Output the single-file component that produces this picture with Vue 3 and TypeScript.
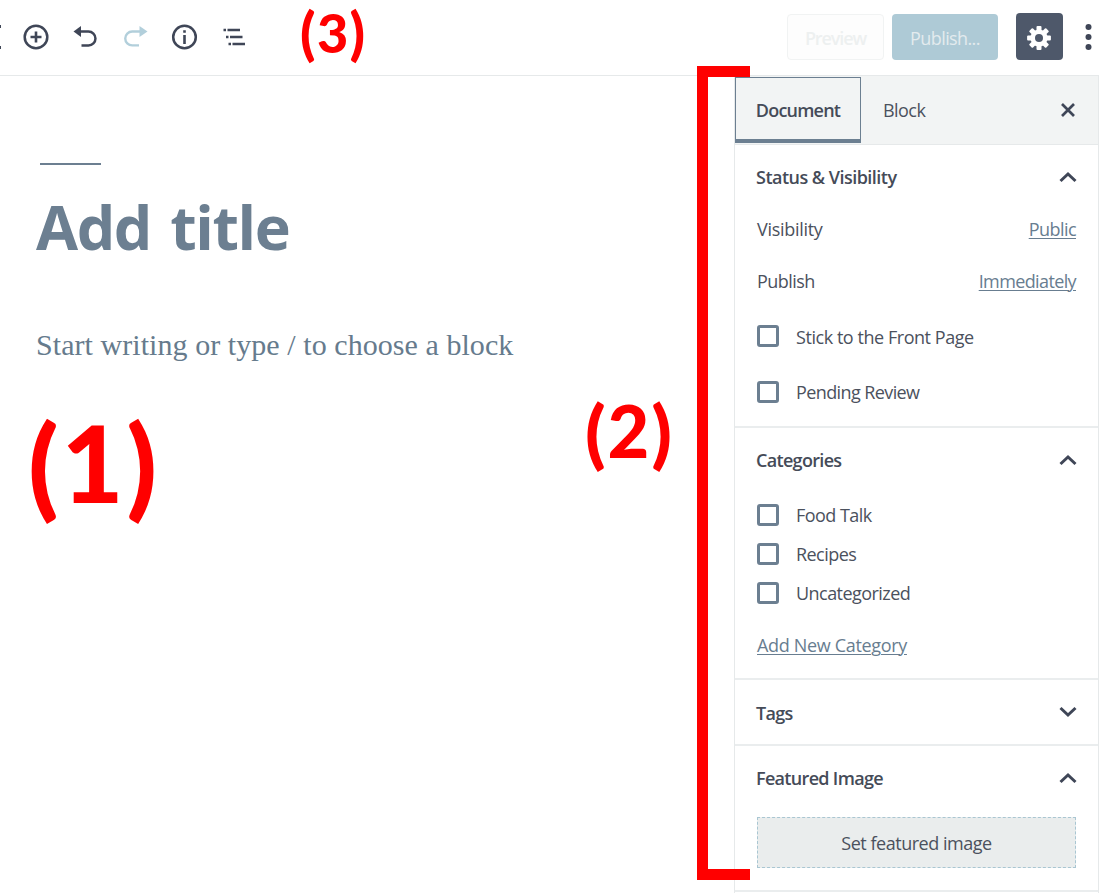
<script setup lang="ts">
import { reactive } from 'vue'

interface Option {
  label: string
  checked: boolean
}

const statusRows = [
  { label: 'Visibility', value: 'Public', key: 'public' },
  { label: 'Publish', value: 'Immediately', key: 'immediately' },
]

const statusOptions = reactive<Option[]>([
  { label: 'Stick to the Front Page', checked: false },
  { label: 'Pending Review', checked: false },
])

const categories = reactive<Option[]>([
  { label: 'Food Talk', checked: false },
  { label: 'Recipes', checked: false },
  { label: 'Uncategorized', checked: false },
])
</script>

<template>
  <div class="editor">
    <header class="toolbar">
      <svg class="tools" width="260" height="75" viewBox="0 0 260 75" fill="none">
        <path d="M0 26.500h1M0 47.500h1" stroke="#3f4657" stroke-width="3" />
        <circle cx="36" cy="37" r="11.300" stroke="#3f4657" stroke-width="2.500" />
        <path d="M36 31.500v11M30.500 37h11" stroke="#3f4657" stroke-width="2.600" />
        <path d="M80 31.500h8.500a6.900 6.900 0 0 1 0 13.900H81.500" stroke="#3f4657" stroke-width="2.500" />
        <path d="M73.500 31.500l7.500-5.500v11z" fill="#3f4657" />
        <path d="M141 31.500h-8.800a6.900 6.900 0 0 0 0 13.900H139" stroke="#b2cfdb" stroke-width="2.400" />
        <path d="M147.500 31.500l-8-5.500v11z" fill="#b2cfdb" />
        <circle cx="184.500" cy="37" r="11.300" stroke="#3f4657" stroke-width="2.500" />
        <path d="M184.500 35v9M184.500 30.200v2.600" stroke="#3f4657" stroke-width="2.600" />
        <path d="M223.500 30h2.500M227.500 30h12.500M226 37h2.500M230 37h12.500M228.500 44h2.500M232.500 44h12.500" stroke="#3f4657" stroke-width="2.500" />
      </svg>
      <div class="actions">
        <button class="btn preview">Preview</button>
        <button class="btn publish">Publish...</button>
        <button class="btn settings" aria-label="Settings">
          <svg width="24" height="24" viewBox="-12 -12 24 24">
            <g fill="#fff">
              <circle r="8.600" />
              <rect v-for="n in 4" :key="n" x="-2.500" y="-11.900" width="5" height="23.800" rx="1" :transform="`rotate(${n * 45})`" />
            </g>
            <circle r="4" fill="#4e586a" />
          </svg>
        </button>
        <svg class="more" width="8" height="30" viewBox="0 0 8 30" fill="#3f4657">
          <circle cx="3.500" cy="5" r="3" />
          <circle cx="3.500" cy="15" r="3" />
          <circle cx="3.500" cy="25" r="3" />
        </svg>
      </div>
    </header>

    <div class="body">
      <main class="canvas">
        <div class="rule"></div>
        <h1 class="title">Add title</h1>
        <p class="prompt">Start writing or type / to choose a block</p>
      </main>

      <aside class="sidebar">
        <nav class="tabs">
          <button class="tab active">Document</button>
          <button class="tab block">Block</button>
          <svg class="close" width="16" height="16" viewBox="0 0 16 16">
            <path d="M2 2l12 12M14 2L2 14" stroke="#3f4657" stroke-width="2.700" />
          </svg>
        </nav>

        <section class="panel status">
          <h2 class="heading">
            <span class="t-status">Status &amp; Visibility</span>
            <svg class="chev" width="18" height="12" viewBox="0 0 18 12"><path d="M1.500 10L9 3l7.500 7" /></svg>
          </h2>
          <div v-for="row in statusRows" :key="row.key" class="row">
            <span :class="`label-${row.key}`">{{ row.label }}</span>
            <a class="link" :class="row.key">{{ row.value }}</a>
          </div>
          <div class="status-options">
            <label v-for="o in statusOptions" :key="o.label" class="option" @click="o.checked = !o.checked">
              <span class="box"></span><span class="text">{{ o.label }}</span>
            </label>
          </div>
        </section>

        <section class="panel categories">
          <h2 class="heading">
            <span>Categories</span>
            <svg class="chev" width="18" height="12" viewBox="0 0 18 12"><path d="M1.500 10L9 3l7.500 7" /></svg>
          </h2>
          <div class="category-options">
            <label v-for="o in categories" :key="o.label" class="option" @click="o.checked = !o.checked">
              <span class="box"></span><span>{{ o.label }}</span>
            </label>
          </div>
          <a class="link add">Add New Category</a>
        </section>

        <section class="panel tags">
          <h2 class="heading">
            <span>Tags</span>
            <svg class="chev" width="18" height="12" viewBox="0 0 18 12"><path d="M1.500 2L9 9l7.500-7" /></svg>
          </h2>
        </section>

        <section class="panel featured">
          <h2 class="heading">
            <span>Featured Image</span>
            <svg class="chev" width="18" height="12" viewBox="0 0 18 12"><path d="M1.500 10L9 3l7.500 7" /></svg>
          </h2>
          <button class="set-image">Set featured image</button>
        </section>
      </aside>
    </div>

    <div class="bracket"></div>
    <div class="note note-1"><i>(</i><b>1</b><i>)</i></div>
    <div class="note note-2"><i>(</i><b>2</b><i>)</i></div>
    <div class="note note-3"><i>(</i><b>3</b><i>)</i></div>
  </div>
</template>

<style>
html,
body {
  margin: 0;
  background: #fff;
  overflow: hidden;
}
</style>

<style scoped>
* {
  box-sizing: border-box;
}
.editor {
  position: relative;
  width: 1099px;
  height: 893px;
  overflow: hidden;
  background: #fff;
  font-family: 'Open Sans', 'Noto Sans', sans-serif;
  font-size: 18px;
  letter-spacing: -0.55px;
  color: #4b515d;
}
button {
  font: inherit;
  letter-spacing: inherit;
  color: inherit;
  padding: 0;
  margin: 0;
  border: 0;
  background: none;
}
.toolbar {
  display: flex;
  justify-content: space-between;
  height: 76px;
  border-bottom: 1px solid #e6e9ea;
}
.tools {
  flex: none;
}
.actions {
  display: flex;
  align-items: flex-start;
  padding-top: 13px;
}
.btn {
  border-radius: 4px;
}
.preview {
  width: 97px;
  height: 46px;
  margin: 1px 8px 0 0;
  padding-top: 1px;
  border: 1px solid #f1f3f3;
  background: #fdfdfd;
  color: #edf0f0;
  font-weight: 600;
  letter-spacing: -1.1px;
}
.publish {
  width: 106px;
  height: 46px;
  margin: 1px 18px 0 0;
  padding-top: 1px;
  background: #aecad6;
  color: #e3ebee;
  letter-spacing: -0.6px;
}
.settings {
  display: flex;
  align-items: center;
  justify-content: center;
  width: 47px;
  height: 47px;
  margin-right: 22px;
  padding-right: 1px;
  background: #4e586a;
}
.settings svg {
  margin-top: 2px;
}
.more {
  margin: 9px 6px 0 0;
}
.body {
  display: flex;
  height: 817px;
}
.canvas {
  flex: 1;
  padding: 87px 0 0 36px;
}
.rule {
  width: 61px;
  height: 2px;
  margin-left: 4px;
  background: #6c7f91;
}
.title {
  margin: 21px 0 0;
  font-size: 61px;
  line-height: 82px;
  font-weight: 700;
  letter-spacing: -1.45px;
  word-spacing: 5px;
  color: #6c7f91;
  white-space: nowrap;
}
.prompt {
  margin: 60px 0 0;
  font-family: 'Liberation Serif', serif;
  font-size: 30px;
  line-height: 34px;
  letter-spacing: 0.06px;
  color: #667b8d;
  white-space: nowrap;
}
.sidebar {
  width: 365px;
  border-left: 1px solid #e6e9ea;
  border-right: 1px solid #e6e9ea;
}
.tabs {
  display: flex;
  align-items: flex-start;
  height: 69px;
  padding-top: 1px;
  background: #f2f4f4;
  border-bottom: 1px solid #e6e9ea;
}
.tab {
  height: 66px;
}
.tab.active {
  width: 126px;
  border: 1px solid #6c7f91;
  border-bottom-width: 4px;
  font-weight: 600;
  color: #454b58;
  padding-top: 2px;
  letter-spacing: -0.78px;
}
.tab.block {
  margin-left: 22px;
}
.close {
  margin: 25px 22px 0 auto;
}
.panel {
  padding: 0 22px 0 21px;
  border-bottom: 2px solid #eaedee;
}
.heading {
  display: flex;
  align-items: center;
  justify-content: space-between;
  height: 64px;
  margin: 0;
  font-size: 18px;
  font-weight: 600;
  letter-spacing: -0.68px;
  color: #454b58;
}
.heading .t-status {
  letter-spacing: -0.52px;
}
.chev {
  margin-right: -1px;
  fill: none;
  stroke: #3f4657;
  stroke-width: 3;
}
.row {
  display: flex;
  justify-content: space-between;
  align-items: center;
  height: 52px;
  padding-left: 1px;
}
.label-public {
  letter-spacing: -0.3px;
}
.link {
  color: #687d90;
  text-decoration: underline;
  text-decoration-thickness: 1px;
  text-underline-offset: 2px;
}
.immediately {
  letter-spacing: -0.62px;
}
.status {
  height: 283px;
}
.heading + .row {
  margin-top: -6px;
}
.status-options {
  padding-top: 18px;
}
.status-options .text {
  padding-top: 2px;
  letter-spacing: -0.45px;
}
.option {
  display: flex;
  align-items: center;
  gap: 17px;
  height: 22px;
  padding-left: 1px;
  line-height: 22px;
}
.status-options .option + .option {
  margin-top: 34px;
}
.status-options .option + .option .text {
  padding-top: 0;
  letter-spacing: -0.6px;
}
.box {
  flex: none;
  width: 22px;
  height: 22px;
  border: 3px solid #6c7f91;
  border-radius: 3px;
}
.categories {
  height: 252px;
}
.category-options {
  display: grid;
  gap: 17px;
  padding-top: 12px;
}
.add {
  display: block;
  margin: 28px 0 0 1px;
  line-height: 26px;
  letter-spacing: -0.33px;
}
.tags {
  height: 66px;
}
.tags .heading span {
  padding-top: 2px;
}
.featured {
  height: 146px;
}
.set-image {
  display: block;
  width: 319px;
  height: 51px;
  margin: 7px 0 0 1px;
  padding-top: 1px;
  border: 1px dashed #a9c6d2;
  background: #eaeded;
  letter-spacing: -0.48px;
}
.bracket {
  position: absolute;
  left: 697px;
  top: 66px;
  width: 53px;
  height: 814px;
  border: 11px solid #f00;
  border-right: 0;
}
.note {
  position: absolute;
  display: flex;
  align-items: center;
  font-family: Lato, sans-serif;
  font-weight: 900;
  line-height: 1;
  letter-spacing: 0;
  color: #f00;
}
.note i {
  font-style: normal;
  font-size: 1.04em;
}
.note b {
  margin: 0 0.025em 0.042em 0.025em;
  font-weight: 900;
}
.note-1 {
  left: 28px;
  top: 408px;
  font-size: 107px;
}
.note-2 {
  left: 585px;
  top: 394px;
  font-size: 72px;
}
.note-3 {
  left: 300px;
  top: 5px;
  font-size: 54px;
}
.note-3 b {
  margin-bottom: 0;
}
</style>
